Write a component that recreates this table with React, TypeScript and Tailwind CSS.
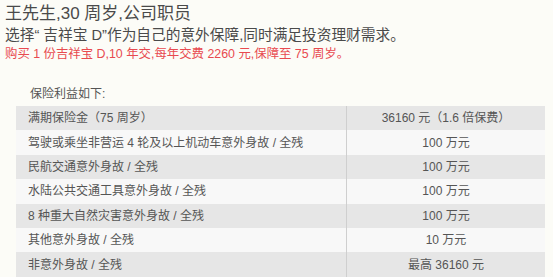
import React from "react";

const rows: [string, string][] = [
  ["满期保险金（75 周岁）", "36160 元（1.6 倍保费）"],
  ["驾驶或乘坐非营运 4 轮及以上机动车意外身故 / 全残", "100 万元"],
  ["民航交通意外身故 / 全残", "100 万元"],
  ["水陆公共交通工具意外身故 / 全残", "100 万元"],
  ["8 种重大自然灾害意外身故 / 全残", "100 万元"],
  ["其他意外身故 / 全残", "10 万元"],
  ["非意外身故 / 全残", "最高 36160 元"],
];

const App: React.FC = () => {
  return (
    <div
      className="w-[553px] h-[277px] overflow-hidden bg-[#fcfcf7] text-[#555] pt-[3px]"
      style={{ fontFamily: '"Liberation Sans", "Noto Sans CJK SC", sans-serif' }}
    >
      {/* Intro */}
      <div className="pl-[5px]">
        <h1 className="text-[17px] leading-[22px] text-[#4a4a4a]">王先生,30 周岁,公司职员</h1>
        <p className="text-[14.7px] leading-[20px] text-[#4a4a4a]">
          选择“ 吉祥宝 D”作为自己的意外保障,同时满足投资理财需求。
        </p>
        <p className="text-[12.4px] leading-[18px] text-[#e84a4f]">
          购买 1 份吉祥宝 D,10 年交,每年交费 2260 元,保障至 75 周岁。
        </p>
      </div>

      {/* Benefits table */}
      <div className="mt-[22px] pl-[30px] text-[12px] leading-[18px] text-[#555]">保险利益如下:</div>
      <div className="ml-[16px] mt-[3px] w-[529px] text-[12px]">
        {rows.map(([label, value], i) => (
          <div
            key={label}
            className={`flex h-[24.4px] items-center ${i % 2 === 0 ? "bg-[#e6e6e6]" : "bg-[#f8f8f8]"}`}
          >
            <div className="w-[330px] pl-[12px]">{label}</div>
            <div className="flex h-full flex-1 items-center justify-center border-l border-[#cfcfcf]">
              {value}
            </div>
          </div>
        ))}
      </div>
    </div>
  );
};

export default App;
